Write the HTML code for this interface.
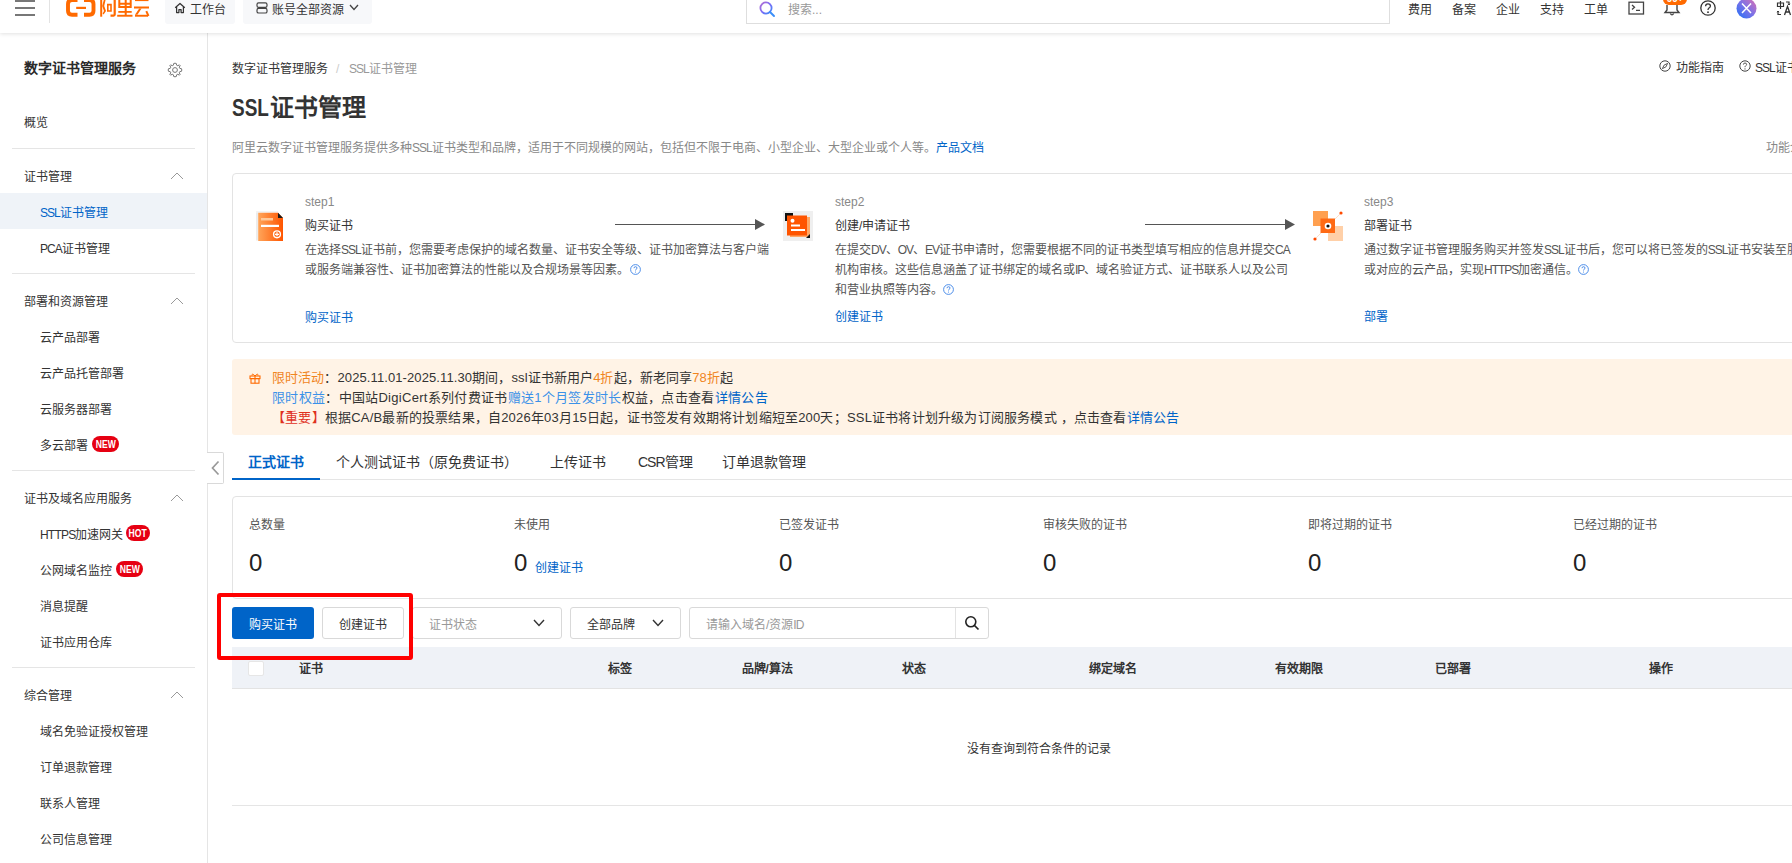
<!DOCTYPE html>
<html lang="zh-CN"><head><meta charset="utf-8">
<style>
*{margin:0;padding:0;box-sizing:border-box}
html,body{width:1792px;height:863px;overflow:hidden}
body{position:relative;font-family:"Liberation Sans",sans-serif;font-size:12px;color:#333;background:#fff}
.t{position:absolute;white-space:nowrap;line-height:22px}
.b{position:absolute}
.blue{color:#0064c8}
.u{letter-spacing:-1px}
.g{color:#808080}
</style></head><body>
<!-- TOPBAR -->
<div class="b" style="left:0;top:0;width:1792px;height:33px;background:#fff;box-shadow:0 1px 4px rgba(0,0,0,.12);z-index:5">
  <div class="b" style="left:15px;top:0;width:20px;height:2px;background:#777"></div>
  <div class="b" style="left:15px;top:7px;width:20px;height:2px;background:#777"></div>
  <div class="b" style="left:15px;top:14px;width:20px;height:2px;background:#777"></div>
  <div class="b" style="left:49px;top:0;width:1px;height:23px;background:#e3e3e3"></div>
  <!-- logo -->
  <svg class="b" style="left:60px;top:0" width="100" height="25" viewBox="60 0 100 25"><g fill="none" stroke="#ff6a00" stroke-width="3.9">
    <path d="M77.5 0 H72 Q68 0 68 4 V10.8 Q68 14.8 72 14.8 H77.5"/>
    <path d="M84 0 H89.5 Q93.5 0 93.5 4 V10.8 Q93.5 14.8 89.5 14.8 H84"/></g>
    <g fill="#ff6a00">
    <rect x="76.2" y="6.8" width="9.8" height="2.2"/>
    <rect x="100.2" y="-3" width="2" height="19.7"/>
    <path d="M101 -2 H106 L104.2 6 L106 11 L103.6 14.6 L102.6 13.6 L104 11 L102.2 6 L103.8 0 H101Z"/>
    <rect x="106" y="-2" width="10" height="2"/>
    <path d="M107 3.8 H111.8 V11.8 H107 Z M108.6 5.4 V10.2 H110.2 V5.4 Z" fill-rule="evenodd"/>
    <path d="M113.6 0 H115.8 V14.6 Q115.8 16.7 113.6 16.7 H110.5 V14.6 H113.6 Z"/>
    <path d="M118.3 -3 H131.7 V8 H118.3 Z M120.3 -1 V2.8 H124.7 V-1 Z M126.7 -1 V2.8 H129.7 V-1 Z M120.3 4.8 V6 H124.7 V4.8 Z M126.7 4.8 V6 H129.7 V4.8 Z" fill-rule="evenodd"/>
    <rect x="124.7" y="7" width="2" height="9"/>
    <rect x="118.3" y="11" width="13.4" height="1.8"/>
    <rect x="117.2" y="14.8" width="15.3" height="1.9"/>
    <rect x="135" y="-1.2" width="13.5" height="2.3"/>
    <rect x="134" y="6.5" width="15" height="2"/>
    <path d="M139.2 8.5 H141.6 L137.4 14.8 H135 Z"/>
    <rect x="135" y="14.8" width="13" height="1.9"/>
    <path d="M145.4 11.6 L147.2 10.8 L149.4 15.6 L147.6 16.6 Z"/>
    </g>
  </svg>
  <div class="b" style="left:165px;top:0;width:70px;height:24px;background:#f7f8fa;border-radius:0 0 3px 3px"></div>
  <svg class="b" style="left:174px;top:2px" width="12" height="12" viewBox="0 0 12 12"><path d="M1.2 5.8 L6 1.5 L10.8 5.8 M2.6 4.6 V10.6 H4.9 V7.6 H7.1 V10.6 H9.4 V4.6" fill="none" stroke="#333" stroke-width="1.25" stroke-linejoin="round"/></svg>
  <div class="t" style="left:190px;top:-1px;color:#333">工作台</div>
  <div class="b" style="left:243px;top:0;width:129px;height:24px;background:#f7f8fa;border-radius:0 0 3px 3px"></div>
  <svg class="b" style="left:256px;top:2px" width="12" height="12" viewBox="0 0 12 12"><rect x="1" y="0.8" width="10" height="4.6" rx="1.6" fill="none" stroke="#444" stroke-width="1.2"/><rect x="1" y="6.4" width="10" height="4.6" rx="1.6" fill="none" stroke="#444" stroke-width="1.2"/></svg>
  <div class="t" style="left:272px;top:-1px;color:#333">账号全部资源</div>
  <svg class="b" style="left:349px;top:4px" width="10" height="7" viewBox="0 0 10 7"><path d="M1 1 L5 5.5 L9 1" fill="none" stroke="#444" stroke-width="1.3"/></svg>
  <!-- search -->
  <div class="b" style="left:746px;top:-1px;width:644px;height:25px;border:1px solid #dedede"></div>
  <svg class="b" style="left:759px;top:1px" width="17" height="17" viewBox="0 0 17 17"><defs><linearGradient id="sg" x1="0" y1="0" x2="1" y2="1"><stop offset="0" stop-color="#b56fd0"/><stop offset=".5" stop-color="#7b6cf6"/><stop offset="1" stop-color="#3a8ef8"/></linearGradient></defs><circle cx="7" cy="7" r="5.6" fill="none" stroke="url(#sg)" stroke-width="1.8"/><path d="M11 11 L15 15" stroke="#3a8ef8" stroke-width="1.9" stroke-linecap="round"/></svg>
  <div class="t" style="left:788px;top:-1px;color:#999">搜索...</div>
  <!-- right nav -->
  <div class="t" style="left:1408px;top:-1px">费用</div>
  <div class="t" style="left:1452px;top:-1px">备案</div>
  <div class="t" style="left:1496px;top:-1px">企业</div>
  <div class="t" style="left:1540px;top:-1px">支持</div>
  <div class="t" style="left:1584px;top:-1px">工单</div>
  <svg class="b" style="left:1628px;top:1px" width="17" height="14" viewBox="0 0 17 14"><rect x="1" y="1.2" width="14.5" height="11.8" fill="none" stroke="#444" stroke-width="1.3"/><path d="M4 4 L6.5 6.2 L4 8.4 M8 9.3 H12" fill="none" stroke="#444" stroke-width="1.3"/></svg>
  <svg class="b" style="left:1663px;top:0" width="18" height="17" viewBox="0 0 18 17"><path d="M4 5 V10 L2 12.5 H16 L14 10 V5" fill="none" stroke="#444" stroke-width="1.4"/><path d="M7.3 13.5 Q9 16.2 10.7 13.5" fill="none" stroke="#444" stroke-width="1.4"/></svg>
  <div class="b" style="left:1663px;top:-7px;width:24px;height:12px;border-radius:6px;background:#ff6a00;color:#fff;font-size:10px;font-weight:bold;line-height:11px;text-align:center;letter-spacing:-.2px">99+</div>
  <svg class="b" style="left:1699px;top:0" width="18" height="17" viewBox="0 0 18 17"><circle cx="9" cy="8" r="7.2" fill="none" stroke="#333" stroke-width="1.3"/><path d="M6.6 6.2 Q6.6 3.8 9 3.8 Q11.4 3.8 11.4 6 Q11.4 7.4 9.8 8.2 Q9 8.7 9 10" fill="none" stroke="#333" stroke-width="1.3"/><circle cx="9" cy="12.2" r=".9" fill="#333"/></svg>
  <svg class="b" style="left:1736px;top:-2px" width="21" height="21" viewBox="0 0 21 21"><defs><linearGradient id="ag" x1="0" y1="1" x2="1" y2="0"><stop offset="0" stop-color="#1e6ff7"/><stop offset=".5" stop-color="#7b72e8"/><stop offset="1" stop-color="#e070b0"/></linearGradient></defs><circle cx="10.5" cy="10.5" r="10" fill="url(#ag)"/><path d="M6 5.5 L15 15 M15 5.5 L6 15" stroke="#fff" stroke-width="1.5"/></svg>
  <svg class="b" style="left:1776px;top:0" width="16" height="16" viewBox="0 0 16 16"><path d="M1.5 3 H7.5 V6.5 H1.5 Z M4.5 1 V9" fill="none" stroke="#333" stroke-width="1.2"/><path d="M10 2 H13 V5" fill="none" stroke="#333" stroke-width="1.2"/><path d="M12 3.8 L13 5 L14 3.8" fill="none" stroke="#333" stroke-width="1"/><path d="M5 14.5 H2 V11" fill="none" stroke="#333" stroke-width="1.2"/><path d="M1 12.2 L2 11 L3 12.2" fill="none" stroke="#333" stroke-width="1"/><path d="M8.5 15 L11.5 6.5 L14.5 15 M9.6 12 H13.4" fill="none" stroke="#333" stroke-width="1.3"/></svg>
</div>
<!-- SIDEBAR -->
<div id="side" class="b" style="left:0;top:33px;width:208px;height:830px;border-right:1px solid #e5e5e5;background:#fff"></div>
<div class="t" style="left:24px;top:57px;font-size:14px;font-weight:bold;color:#2a2a2a">数字证书管理服务</div>
<svg class="b" style="left:167px;top:62px" width="16" height="16" viewBox="0 0 16 16"><path d="M8 1.2 L9.3 1.5 L9.6 3.2 L10.9 3.8 L12.3 2.8 L13.2 3.7 L12.2 5.1 L12.8 6.4 L14.5 6.7 L14.8 8 L14.5 9.3 L12.8 9.6 L12.2 10.9 L13.2 12.3 L12.3 13.2 L10.9 12.2 L9.6 12.8 L9.3 14.5 L8 14.8 L6.7 14.5 L6.4 12.8 L5.1 12.2 L3.7 13.2 L2.8 12.3 L3.8 10.9 L3.2 9.6 L1.5 9.3 L1.2 8 L1.5 6.7 L3.2 6.4 L3.8 5.1 L2.8 3.7 L3.7 2.8 L5.1 3.8 L6.4 3.2 L6.7 1.5 Z" fill="none" stroke="#777" stroke-width="1" stroke-linejoin="round"/><circle cx="8" cy="8" r="2.4" fill="none" stroke="#777" stroke-width="1"/></svg>
<div class="t" style="left:24px;top:112px;">概览</div>
<div class="b" style="left:12px;top:148px;width:183px;height:1px;background:#e5e5e5"></div>
<div class="t" style="left:24px;top:166px;">证书管理</div>
<svg class="b" style="left:170px;top:172px" width="14" height="8" viewBox="0 0 14 8"><path d="M1 7 L7 1 L13 7" fill="none" stroke="#999" stroke-width="1"/></svg>
<div class="b" style="left:0;top:193px;width:207px;height:36px;background:#eff3f8"></div>
<div class="t" style="left:40px;top:201.5px;color:#0064c8"><span class="u">SSL</span>证书管理</div>
<div class="t" style="left:40px;top:237.5px;"><span class="u">PCA</span>证书管理</div>
<div class="b" style="left:12px;top:273px;width:183px;height:1px;background:#e5e5e5"></div>
<div class="t" style="left:24px;top:291px;">部署和资源管理</div>
<svg class="b" style="left:170px;top:297px" width="14" height="8" viewBox="0 0 14 8"><path d="M1 7 L7 1 L13 7" fill="none" stroke="#999" stroke-width="1"/></svg>
<div class="t" style="left:40px;top:327px;">云产品部署</div>
<div class="t" style="left:40px;top:363px;">云产品托管部署</div>
<div class="t" style="left:40px;top:399px;">云服务器部署</div>
<div class="t" style="left:40px;top:435px;">多云部署</div>
<div class="b" style="left:92px;top:436px;width:27px;height:16px;border-radius:8px;background:#e60012;color:#fff;font-size:11px;font-weight:bold;line-height:16px;text-align:center;font-family:'Liberation Sans',sans-serif"><span style="display:inline-block;transform:scaleX(.78)">NEW</span></div>
<div class="b" style="left:12px;top:470px;width:183px;height:1px;background:#e5e5e5"></div>
<div class="t" style="left:24px;top:487.5px;">证书及域名应用服务</div>
<svg class="b" style="left:170px;top:493.5px" width="14" height="8" viewBox="0 0 14 8"><path d="M1 7 L7 1 L13 7" fill="none" stroke="#999" stroke-width="1"/></svg>
<div class="t" style="left:40px;top:523.5px;"><span class="u" style="letter-spacing:-.8px">HTTPS</span>加速网关</div>
<div class="t" style="left:40px;top:559.5px;">公网域名监控</div>
<div class="t" style="left:40px;top:595.5px;">消息提醒</div>
<div class="t" style="left:40px;top:631.5px;">证书应用仓库</div>
<div class="b" style="left:126px;top:525px;width:24px;height:16px;border-radius:8px;background:#e60012;color:#fff;font-size:11px;font-weight:bold;line-height:16px;text-align:center;font-family:'Liberation Sans',sans-serif"><span style="display:inline-block;transform:scaleX(.78)">HOT</span></div>
<div class="b" style="left:116px;top:561px;width:27px;height:16px;border-radius:8px;background:#e60012;color:#fff;font-size:11px;font-weight:bold;line-height:16px;text-align:center;font-family:'Liberation Sans',sans-serif"><span style="display:inline-block;transform:scaleX(.78)">NEW</span></div>
<div class="b" style="left:12px;top:667px;width:183px;height:1px;background:#e5e5e5"></div>
<div class="t" style="left:24px;top:684.5px;">综合管理</div>
<svg class="b" style="left:170px;top:690.5px" width="14" height="8" viewBox="0 0 14 8"><path d="M1 7 L7 1 L13 7" fill="none" stroke="#999" stroke-width="1"/></svg>
<div class="t" style="left:40px;top:720.5px;">域名免验证授权管理</div>
<div class="t" style="left:40px;top:756.5px;">订单退款管理</div>
<div class="t" style="left:40px;top:792.5px;">联系人管理</div>
<div class="t" style="left:40px;top:828.5px;">公司信息管理</div>
<div class="b" style="left:207px;top:452px;width:17px;height:32px;border:1px solid #d9d9d9;border-left:none;background:#fff;border-radius:0 2px 2px 0"></div>
<svg class="b" style="left:210px;top:460px" width="10" height="16" viewBox="0 0 10 16"><path d="M8.5 1.5 L2.5 8 L8.5 14.5" fill="none" stroke="#999" stroke-width="1.7"/></svg>
<!-- MAIN -->
<div class="t" style="left:232px;top:57.5px;color:#333">数字证书管理服务</div>
<div class="t" style="left:336px;top:57.5px;color:#ccc">/</div>
<div class="t" style="left:349px;top:57.5px;color:#999"><span class="u">SSL</span>证书管理</div>
<svg class="b" style="left:1659px;top:60px" width="12" height="12" viewBox="0 0 12 12"><circle cx="6" cy="6" r="5.2" fill="none" stroke="#444" stroke-width="1"/><path d="M8.6 3.4 L6.9 6.9 L3.4 8.6 L5.1 5.1 Z" fill="none" stroke="#444" stroke-width=".9" stroke-linejoin="round"/></svg>
<div class="t" style="left:1676px;top:56.5px;color:#333">功能指南</div>
<svg class="b" style="left:1739px;top:60px" width="12" height="12" viewBox="0 0 12 12"><circle cx="6" cy="6" r="5.2" fill="none" stroke="#444" stroke-width="1"/><path d="M4.4 4.6 Q4.4 3 6 3 Q7.6 3 7.6 4.5 Q7.6 5.4 6.6 5.9 Q6 6.2 6 7.2" fill="none" stroke="#444" stroke-width=".9"/><circle cx="6" cy="8.9" r=".6" fill="#444"/></svg>
<div class="t" style="left:1755px;top:56.5px;color:#333"><span class="u">SSL</span>证书管理</div>
<div class="t" style="left:232px;top:93px;font-size:24px;font-weight:bold;color:#333;line-height:30px"><span style="display:inline-block;width:38px;font-weight:bold;font-size:24px;transform:scaleX(.79);transform-origin:0 50%;color:#333">SSL</span>证书管理</div>
<div class="t" style="left:232px;top:137px;color:#888">阿里云数字证书管理服务提供多种<span class="u">SSL</span>证书类型和品牌，适用于不同规模的网站，包括但不限于电商、小型企业、大型企业或个人等。<span class="blue">产品文档</span></div>
<div class="t" style="left:1766px;top:137px;color:#888">功能介绍</div>
<div class="b" style="left:232px;top:173px;width:1600px;height:170px;border:1px solid #e3e3e3;border-radius:4px"></div>
<svg class="b" style="left:255px;top:210px" width="34" height="32" viewBox="0 0 34 32"><defs><linearGradient id="og1" x1="0" y1="0" x2="1" y2="0"><stop offset="0" stop-color="#ffa55a"/><stop offset="1" stop-color="#ff5500"/></linearGradient></defs><rect x="1" y="1" width="2.3" height="29.5" fill="#ececec"/><rect x="1" y="1" width="22" height="1.8" fill="#f3f3f3"/><path d="M3.2 2.8 H23 L28 8 V31 H3.2 Z" fill="url(#og1)"/><path d="M23 2.8 V8 H28 Z" fill="#1a1a1a"/><rect x="6" y="8" width="12" height="2.5" fill="#ffc898"/><rect x="6" y="14.8" width="18" height="2.2" fill="#fff"/><circle cx="22" cy="24.3" r="3.4" fill="none" stroke="#fff" stroke-width="1.4"/><path d="M22 22.3 V26.3 M20 24.3 H24" stroke="#fff" stroke-width="1.2"/></svg>
<svg class="b" style="left:783px;top:211px" width="30" height="30" viewBox="0 0 30 30"><rect x="0" y="0" width="30" height="30" fill="#efefef"/><rect x="7" y="6" width="20" height="20" fill="#ffa866"/><rect x="2" y="2" width="8" height="8" fill="#111"/><rect x="4" y="4.5" width="20" height="20" fill="#ff5500"/><path d="M27 23 V27 H23 Z" fill="#111"/><circle cx="9.5" cy="9.8" r="2" fill="#fff"/><rect x="8" y="13.5" width="9" height="2" fill="#fff"/><rect x="8" y="18" width="14" height="2" fill="#fff"/></svg>
<svg class="b" style="left:1311px;top:209px" width="34" height="34" viewBox="0 0 34 34"><path d="M4 30 L30 4" stroke="#ffc8a0" stroke-width=".6"/><rect x="2" y="2" width="15" height="15" fill="#ffa050"/><rect x="17" y="17" width="15" height="15" fill="#ffd0a8"/><rect x="9.5" y="9.5" width="14.5" height="14.5" fill="#ff6a14"/><circle cx="30" cy="4" r="1.6" fill="#ff4a00"/><circle cx="4" cy="30" r="1.6" fill="#ff4a00"/><circle cx="17" cy="17" r="3.3" fill="#fff"/><circle cx="17" cy="17" r="1.6" fill="#111"/></svg>
<div class="b" style="left:615px;top:224px;width:141px;height:1px;background:#555"></div>
<svg class="b" style="left:755px;top:219px" width="10" height="11" viewBox="0 0 10 11"><path d="M0 0 L10 5.5 L0 11 Z" fill="#555"/></svg>
<div class="b" style="left:1145px;top:224px;width:141px;height:1px;background:#555"></div>
<svg class="b" style="left:1285px;top:219px" width="10" height="11" viewBox="0 0 10 11"><path d="M0 0 L10 5.5 L0 11 Z" fill="#555"/></svg>
<div class="t" style="left:305px;top:191px;color:#888">step1</div>
<div class="t" style="left:305px;top:214.5px;color:#333">购买证书</div>
<div class="t" style="left:305px;top:238.5px;color:#555">在选择<span class="u">SSL</span>证书前，您需要考虑保护的域名数量、证书安全等级、证书加密算法与客户端</div>
<div class="t" style="left:305px;top:258.5px;color:#555">或服务端兼容性、证书加密算法的性能以及合规场景等因素。</div>
<div class="t" style="left:305px;top:306.5px;color:#0064c8">购买证书</div>
<div class="t" style="left:835px;top:191px;color:#888">step2</div>
<div class="t" style="left:835px;top:214.5px;color:#333">创建/申请证书</div>
<div class="t" style="left:835px;top:238.5px;color:#555">在提交<span class="u">DV</span>、<span class="u">OV</span>、<span class="u">EV</span>证书申请时，您需要根据不同的证书类型填写相应的信息并提交<span class="u">CA</span></div>
<div class="t" style="left:835px;top:258.5px;color:#555">机构审核。这些信息涵盖了证书绑定的域名或<span class="u">IP</span>、域名验证方式、证书联系人以及公司</div>
<div class="t" style="left:835px;top:278.5px;color:#555">和营业执照等内容。</div>
<div class="t" style="left:835px;top:305.5px;color:#0064c8">创建证书</div>
<div class="t" style="left:1364px;top:191px;color:#888">step3</div>
<div class="t" style="left:1364px;top:214.5px;color:#333">部署证书</div>
<div class="t" style="left:1364px;top:238.5px;color:#555">通过数字证书管理服务购买并签发<span class="u">SSL</span>证书后，您可以将已签发的<span class="u">SSL</span>证书安装至服务器</div>
<div class="t" style="left:1364px;top:258.5px;color:#555">或对应的云产品，实现<span class="u">HTTPS</span>加密通信。</div>
<div class="t" style="left:1364px;top:305.5px;color:#0064c8">部署</div>
<svg class="b" style="left:630px;top:264px" width="11" height="11" viewBox="0 0 11 11"><circle cx="5.5" cy="5.5" r="4.9" fill="none" stroke="#3b82e6" stroke-width=".9"/><path d="M4 4.2 Q4 2.7 5.5 2.7 Q7 2.7 7 4 Q7 4.9 6.1 5.3 Q5.5 5.6 5.5 6.5" fill="none" stroke="#3b82e6" stroke-width=".9"/><circle cx="5.5" cy="8" r=".55" fill="#3b82e6"/></svg>
<svg class="b" style="left:943px;top:284px" width="11" height="11" viewBox="0 0 11 11"><circle cx="5.5" cy="5.5" r="4.9" fill="none" stroke="#3b82e6" stroke-width=".9"/><path d="M4 4.2 Q4 2.7 5.5 2.7 Q7 2.7 7 4 Q7 4.9 6.1 5.3 Q5.5 5.6 5.5 6.5" fill="none" stroke="#3b82e6" stroke-width=".9"/><circle cx="5.5" cy="8" r=".55" fill="#3b82e6"/></svg>
<svg class="b" style="left:1578px;top:264px" width="11" height="11" viewBox="0 0 11 11"><circle cx="5.5" cy="5.5" r="4.9" fill="none" stroke="#3b82e6" stroke-width=".9"/><path d="M4 4.2 Q4 2.7 5.5 2.7 Q7 2.7 7 4 Q7 4.9 6.1 5.3 Q5.5 5.6 5.5 6.5" fill="none" stroke="#3b82e6" stroke-width=".9"/><circle cx="5.5" cy="8" r=".55" fill="#3b82e6"/></svg>
<div class="b" style="left:232px;top:359px;width:1600px;height:76px;background:#fff3e6;border-radius:3px"></div>
<svg class="b" style="left:249px;top:372px" width="12" height="12" viewBox="0 0 12 12"><rect x="1" y="4" width="10" height="2.6" fill="none" stroke="#ff6a00" stroke-width="1.1"/><rect x="2" y="6.6" width="8" height="4.6" fill="none" stroke="#ff6a00" stroke-width="1.1"/><path d="M6 4 V11.2" stroke="#ff6a00" stroke-width="1.1"/><path d="M6 4 Q3 0.5 3 3.5 M6 4 Q9 0.5 9 3.5" fill="none" stroke="#ff6a00" stroke-width="1"/></svg>
<div class="t" style="left:272px;top:367px;font-size:13px;color:#333;letter-spacing:.1px"><span style="color:#f0851f">限时活动</span>：2025.11.01-2025.11.30期间，ssl证书新用户<span style="color:#f0851f">4折</span>起，新老同享<span style="color:#f0851f">78折</span>起</div>
<div class="t" style="left:272px;top:387px;font-size:13px;color:#333;letter-spacing:.3px"><span style="color:#3b91e8">限时权益</span>：<b style="font-weight:500">中国站DigiCert系列付费证书</b><span style="color:#3b91e8">赠送1个月签发时长</span><b style="font-weight:500">权益，点击查看</b><b style="font-weight:500;color:#0064c8">详情公告</b></div>
<div class="t" style="left:272px;top:407px;font-size:13px;color:#333;letter-spacing:.2px"><span style="color:#e0301e">【重要】</span><b style="font-weight:500">根据CA/B最新的投票结果，自2026年03月15日起，证书签发有效期将计划缩短至200天；SSL证书将计划升级为订阅服务模式 ，点击查看</b><b style="font-weight:500;color:#0064c8">详情公告</b></div>
<div class="b" style="left:232px;top:479px;width:1600px;height:1px;background:#e5e5e5"></div>
<div class="b" style="left:232px;top:478px;width:88px;height:2px;background:#0064c8"></div>
<div class="t" style="left:248px;top:451px;font-size:14px;color:#0064c8;font-weight:bold">正式证书</div>
<div class="t" style="left:336px;top:451px;font-size:14px;color:#333">个人测试证书（原免费证书）</div>
<div class="t" style="left:550px;top:451px;font-size:14px;color:#333">上传证书</div>
<div class="t" style="left:638px;top:451px;font-size:14px;color:#333"><span class="u">CSR</span>管理</div>
<div class="t" style="left:722px;top:451px;font-size:14px;color:#333">订单退款管理</div>
<div class="b" style="left:232px;top:496px;width:1600px;height:103px;border:1px solid #e3e3e3;border-radius:4px"></div>
<div class="t" style="left:249px;top:513.5px;color:#555">总数量</div>
<div class="t" style="left:249px;top:553px;font-size:24px;color:#222;line-height:30px;top:548px">0</div>
<div class="t" style="left:514px;top:513.5px;color:#555">未使用</div>
<div class="t" style="left:514px;top:553px;font-size:24px;color:#222;line-height:30px;top:548px">0</div>
<div class="t" style="left:779px;top:513.5px;color:#555">已签发证书</div>
<div class="t" style="left:779px;top:553px;font-size:24px;color:#222;line-height:30px;top:548px">0</div>
<div class="t" style="left:1043px;top:513.5px;color:#555">审核失败的证书</div>
<div class="t" style="left:1043px;top:553px;font-size:24px;color:#222;line-height:30px;top:548px">0</div>
<div class="t" style="left:1308px;top:513.5px;color:#555">即将过期的证书</div>
<div class="t" style="left:1308px;top:553px;font-size:24px;color:#222;line-height:30px;top:548px">0</div>
<div class="t" style="left:1573px;top:513.5px;color:#555">已经过期的证书</div>
<div class="t" style="left:1573px;top:553px;font-size:24px;color:#222;line-height:30px;top:548px">0</div>
<div class="t" style="left:535px;top:556.5px;color:#0064c8">创建证书</div>
<div class="b" style="left:232px;top:607px;width:82px;height:32px;background:#0064c8;border-radius:3px"></div>
<div class="t" style="left:249px;top:613.5px;color:#fff">购买证书</div>
<div class="b" style="left:322px;top:607px;width:82px;height:32px;border:1px solid #d9d9d9;border-radius:3px;background:#fff"></div>
<div class="t" style="left:339px;top:613.5px;color:#333">创建证书</div>
<div class="b" style="left:412px;top:607px;width:150px;height:32px;border:1px solid #d9d9d9;border-radius:3px"></div>
<div class="t" style="left:429px;top:613.5px;color:#999">证书状态</div>
<svg class="b" style="left:533px;top:619px" width="12" height="8" viewBox="0 0 12 8"><path d="M1 1 L6 6.5 L11 1" fill="none" stroke="#333" stroke-width="1.4"/></svg>
<div class="b" style="left:570px;top:607px;width:111px;height:32px;border:1px solid #d9d9d9;border-radius:3px"></div>
<div class="t" style="left:587px;top:613.5px;color:#333">全部品牌</div>
<svg class="b" style="left:652px;top:619px" width="12" height="8" viewBox="0 0 12 8"><path d="M1 1 L6 6.5 L11 1" fill="none" stroke="#333" stroke-width="1.4"/></svg>
<div class="b" style="left:689px;top:607px;width:300px;height:32px;border:1px solid #d9d9d9;border-radius:3px"></div>
<div class="b" style="left:955px;top:608px;width:1px;height:30px;background:#e3e3e3"></div>
<div class="t" style="left:706px;top:613.5px;color:#999">请输入域名/资源<span class="u">ID</span></div>
<svg class="b" style="left:964px;top:615px" width="16" height="16" viewBox="0 0 16 16"><circle cx="6.8" cy="6.8" r="5" fill="none" stroke="#222" stroke-width="1.6"/><path d="M10.5 10.5 L14.5 14.5" stroke="#222" stroke-width="1.7"/></svg>
<div class="b" style="left:232px;top:647px;width:1600px;height:42px;background:#eff2f7;border-bottom:1px solid #e3e3e3"></div>
<div class="b" style="left:248px;top:661px;width:16px;height:15px;border:1px solid #e6e6e6;border-radius:2px;background:#fff"></div>
<div class="t" style="left:299px;top:657.5px;font-weight:bold;color:#333">证书</div>
<div class="t" style="left:608px;top:657.5px;font-weight:bold;color:#333">标签</div>
<div class="t" style="left:741.5px;top:657.5px;font-weight:bold;color:#333">品牌/算法</div>
<div class="t" style="left:901.5px;top:657.5px;font-weight:bold;color:#333">状态</div>
<div class="t" style="left:1088.5px;top:657.5px;font-weight:bold;color:#333">绑定域名</div>
<div class="t" style="left:1275px;top:657.5px;font-weight:bold;color:#333">有效期限</div>
<div class="t" style="left:1435px;top:657.5px;font-weight:bold;color:#333">已部署</div>
<div class="t" style="left:1648.5px;top:657.5px;font-weight:bold;color:#333">操作</div>
<div class="t" style="left:967px;top:737.5px;color:#333">没有查询到符合条件的记录</div>
<div class="b" style="left:232px;top:805px;width:1600px;height:1px;background:#e5e5e5"></div>
<div class="b" style="left:217px;top:593px;width:196px;height:67px;border:4px solid #ff0000;border-radius:3px;z-index:3"></div>
</body></html>
